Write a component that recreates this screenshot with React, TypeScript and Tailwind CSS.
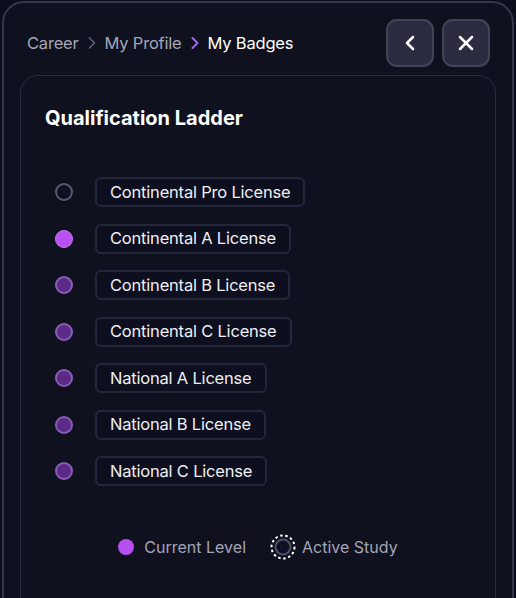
import { ChevronLeft, ChevronRight, X } from 'lucide-react';

const levels = [
  { label: 'Continental Pro License', state: 'locked' },
  { label: 'Continental A License', state: 'current' },
  { label: 'Continental B License', state: 'done' },
  { label: 'Continental C License', state: 'done' },
  { label: 'National A License', state: 'done' },
  { label: 'National B License', state: 'done' },
  { label: 'National C License', state: 'done' },
];

function Dot({ state }: { state: string }) {
  if (state === 'current') {
    return <span className="w-[18px] h-[18px] rounded-full bg-[#b84ff0] border border-[#c97af5] shrink-0" />;
  }
  if (state === 'done') {
    return <span className="w-[18px] h-[18px] rounded-full bg-[#5a2a86] border-2 border-[#8a5cb8] shrink-0" />;
  }
  return <span className="w-[18px] h-[18px] rounded-full bg-[#0f1024] border-2 border-[#5b5c70] shrink-0" />;
}

export default function App() {
  return (
    <div
      className="w-[516px] h-[598px] overflow-hidden bg-[#0d0e1c] px-[2px] pt-[1px]"
      style={{ fontFamily: 'Inter, "Noto Sans", sans-serif' }}
    >
      <div className="h-[640px] rounded-[22px] border-2 border-[#363849] bg-[#10111f] px-4 pt-[16px]">
        {/* Header */}
        <div className="flex items-center justify-between pl-[7px] pr-[6px]">
          <nav className="flex items-center text-[16.5px] tracking-[-0.2px]">
            <span className="text-[#a4a6b8]">Career</span>
            <ChevronRight className="w-5 h-5 mx-[3px] text-[#5f6175]" strokeWidth={2} />
            <span className="text-[#a4a6b8]">My Profile</span>
            <ChevronRight className="w-5 h-5 mx-[3px] text-[#a066ea]" strokeWidth={2.5} />
            <span className="text-white">My Badges</span>
          </nav>
          <div className="flex gap-2">
            <button className="w-12 h-12 rounded-[11px] bg-[#2b2c41] border-2 border-[#414357] flex items-center justify-center text-white">
              <ChevronLeft className="w-6 h-6" strokeWidth={2.5} />
            </button>
            <button className="w-12 h-12 rounded-[11px] bg-[#2b2c41] border-2 border-[#414357] flex items-center justify-center text-white">
              <X className="w-6 h-6" strokeWidth={2.5} />
            </button>
          </div>
        </div>

        {/* Card */}
        <div className="mt-2 h-[600px] rounded-[18px] border border-[#2a2c40] bg-[#10111f] px-6 pt-[28px]">
          <h2 className="text-xl font-bold text-white leading-7">Qualification Ladder</h2>

          <div className="mt-[45px] ml-[10px] flex flex-col gap-[16.5px]">
            {levels.map((l) => (
              <div key={l.label} className="flex items-center gap-[22px]">
                <Dot state={l.state} />
                <span className="h-[30px] flex items-center px-[13px] rounded-[6px] border-2 border-[#24263a] bg-[#0e0f1e] text-[16.5px] text-[#eeeef4] tracking-[-0.2px]">
                  {l.label}
                </span>
              </div>
            ))}
          </div>

          <div className="mt-[48px] flex items-center justify-center gap-[24px] text-base text-[#a3a5b6]">
            <div className="flex items-center gap-[10px]">
              <span className="w-4 h-4 rounded-full bg-[#b84ff0]" />
              <span>Current Level</span>
            </div>
            <div className="flex items-center gap-[6px]">
              <svg width="26" height="26" viewBox="0 0 26 26">
                <circle cx="13" cy="13" r="11.5" fill="none" stroke="#ffffff" strokeWidth="2" strokeDasharray="2.5 2.6" />
                <circle cx="13" cy="13" r="7.5" fill="#0f1024" stroke="#4e5063" strokeWidth="2" />
              </svg>
              <span>Active Study</span>
            </div>
          </div>
        </div>
      </div>
    </div>
  );
}
